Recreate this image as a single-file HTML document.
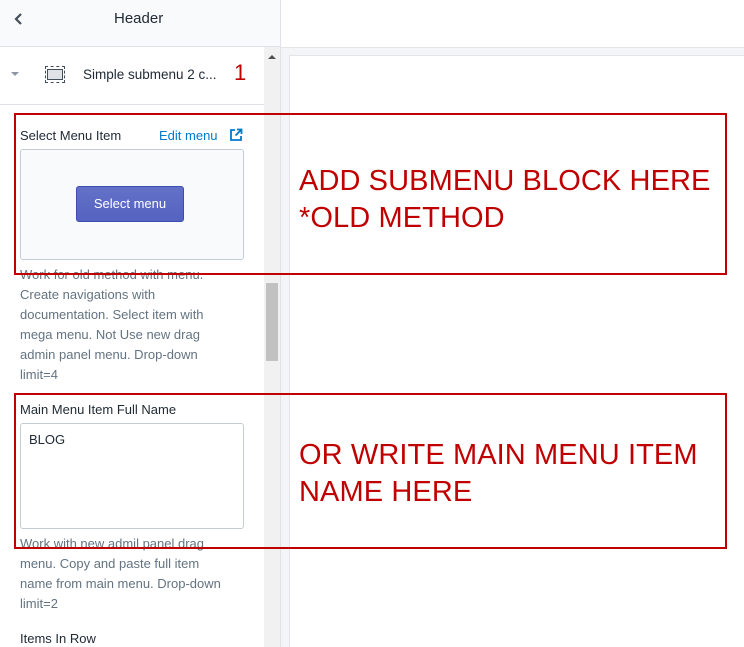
<!DOCTYPE html>
<html><head><style>
*{margin:0;padding:0;box-sizing:border-box}
body{width:744px;height:647px;overflow:hidden;position:relative;font-family:"Liberation Sans",Arial,sans-serif;background:#fff;color:#212b36}
.a{position:absolute}
.t{font-size:13px;color:#212b36}
.h{font-size:13px;color:#637381;line-height:20px;white-space:nowrap}
.red{position:absolute;border:2px solid #c00000}
.big{position:absolute;color:#c00000;font-size:29px;line-height:37px;letter-spacing:0.1px}
</style></head><body>
<div class="a" style="left:0;top:0;width:281px;height:47px;background:#f9fafb;border-bottom:1px solid #dfe3e8"></div>
<svg class="a" style="left:13px;top:12px" width="12" height="14" viewBox="0 0 12 14"><path d="M8 2L3 7l5 5" fill="none" stroke="#454f5b" stroke-width="2.2"/></svg>
<div class="a" style="left:114px;top:10px;font-size:15px;color:#212b36">Header</div>
<div class="a" style="left:280px;top:0;width:1px;height:647px;background:#dfe3e8"></div>
<div class="a" style="left:281px;top:47px;width:463px;height:600px;background:#f4f5f6;border-top:1px solid #e3e5e8"></div>
<div class="a" style="left:289px;top:55px;width:455px;height:592px;background:#fff;border-left:1px solid #e3e5e8;border-top:1px solid #e3e5e8"></div>
<div class="a" style="left:264px;top:47px;width:16px;height:600px;background:#f1f1f1"></div>
<div class="a" style="left:268px;top:55px;width:0;height:0;border-left:4px solid transparent;border-right:4px solid transparent;border-bottom:4px solid #505050"></div>
<div class="a" style="left:266px;top:283px;width:12px;height:78px;background:#c1c1c1"></div>
<div class="a" style="left:11px;top:72px;width:0;height:0;border-left:4px solid transparent;border-right:4px solid transparent;border-top:4px solid #8c97a3"></div>
<div class="a" style="left:45px;top:66px;width:20px;height:17px;border:1px dashed #454f5b"></div>
<div class="a" style="left:47px;top:69px;width:16px;height:11px;background:#dfe3e8;border:1px solid #454f5b"></div>
<div class="a t" style="left:83px;top:67px;font-size:13.5px">Simple submenu 2 c...</div>
<div class="a" style="left:234px;top:60px;font-size:22px;color:#c00000">1</div>
<div class="a" style="left:0;top:104px;width:264px;height:1px;background:#dfe3e8"></div>
<div class="a t" style="left:20px;top:128px">Select Menu Item</div>
<div class="a" style="left:159px;top:128px;font-size:13px;color:#007ace">Edit menu</div>
<svg class="a" style="left:229px;top:128px" width="14" height="14" viewBox="0 0 14 14"><path d="M6 2H2v10h10V8M8 1.5h4.5V6M12.5 1.5L6.5 7.5" fill="none" stroke="#007ace" stroke-width="1.8"/></svg>
<div class="a" style="left:20px;top:149px;width:224px;height:111px;background:#f9fafb;border:1px solid #c4cdd5;border-radius:3px"></div>
<div class="a" style="left:76px;top:186px;width:108px;height:36px;background:linear-gradient(#6371c7,#5563c1);border:1px solid #3f4eae;border-radius:3px;color:#fff;font-size:13px;text-align:center;line-height:34px">Select menu</div>
<div class="a h" style="left:20px;top:265px">Work for old method with menu.<br>Create navigations with<br>documentation. Select item with<br>mega menu. Not Use new drag<br>admin panel menu. Drop-down<br>limit=4</div>
<div class="a t" style="left:20px;top:402px">Main Menu Item Full Name</div>
<div class="a" style="left:20px;top:423px;width:224px;height:106px;border:1px solid #c4cdd5;border-radius:3px;background:#fff"></div>
<div class="a t" style="left:29px;top:432px">BLOG</div>
<div class="a h" style="left:20px;top:534px">Work with new admil panel drag<br>menu. Copy and paste full item<br>name from main menu. Drop-down<br>limit=2</div>
<div class="a t" style="left:20px;top:631px">Items In Row</div>
<div class="red" style="left:14px;top:113px;width:713px;height:162px"></div>
<div class="red" style="left:14px;top:393px;width:713px;height:156px"></div>
<div class="big" style="left:299px;top:163px">ADD SUBMENU BLOCK HERE<br>*OLD METHOD</div>
<div class="big" style="left:299px;top:437px">OR WRITE MAIN MENU ITEM<br>NAME HERE</div>
</body></html>
